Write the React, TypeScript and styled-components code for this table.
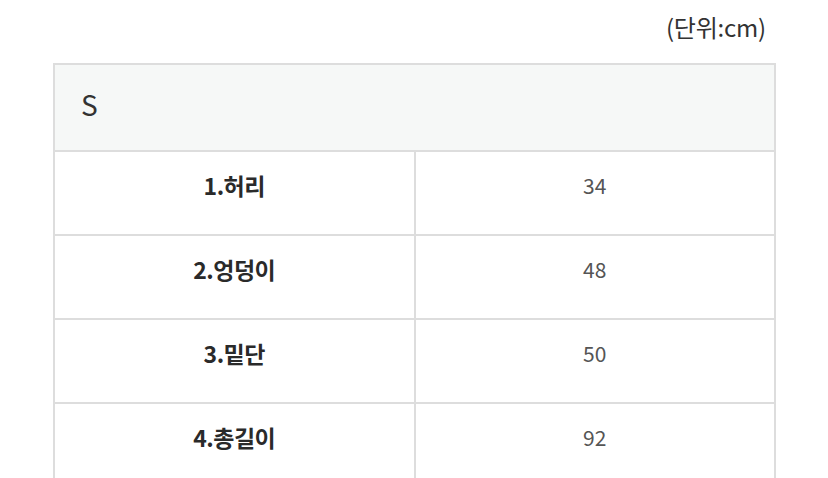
import React from 'react';
import styled, { createGlobalStyle } from 'styled-components';

const GlobalStyle = createGlobalStyle`
    body {
        margin: 0;
        background: #ffffff;
        font-family: "Noto Sans CJK KR", "Noto Sans", sans-serif;
    }
`

const Page = styled.div`
    padding: 0 52px 0 53px;
`

const Unit = styled.div`
    height: 63px;
    display: flex;
    align-items: center;
    justify-content: flex-end;
    padding-right: 10px;
    padding-bottom: 10px;
    box-sizing: border-box;
    font-size: 24px;
    color: #333;
    letter-spacing: -0.2px;
`

const Table = styled.table`
    width: 100%;
    border-collapse: collapse;
    table-layout: fixed;
`

const HeadCell = styled.th`
    height: 78px;
    border: 2px solid #dddddd;
    background: #f6f8f7;
    text-align: left;
    padding: 0 0 7px 26px;
    font-size: 28px;
    font-weight: 400;
    color: #333;
`

const Cell = styled.td<{ label?: boolean }>`
    height: 66px;
    border: 2px solid #dddddd;
    text-align: center;
    padding: 0 0 16px;
    font-size: ${({ label }) => (label ? '23px' : '21px')};
    font-weight: ${({ label }) => (label ? 700 : 400)};
    color: ${({ label }) => (label ? '#2a2a2a' : '#555')};
    letter-spacing: ${({ label }) => (label ? '-0.5px' : '0')};
`

const rows = [
    { name: '1.허리', value: '34' },
    { name: '2.엉덩이', value: '48' },
    { name: '3.밑단', value: '50' },
    { name: '4.총길이', value: '92' },
];

const App = () => {
    return (
        <Page>
            <GlobalStyle />
            <Unit>(단위:cm)</Unit>
            <Table>
                <thead>
                    <tr>
                        <HeadCell colSpan={2}>S</HeadCell>
                    </tr>
                </thead>
                <tbody>
                    {rows.map((row) => (
                        <tr key={row.name}>
                            <Cell label>{row.name}</Cell>
                            <Cell>{row.value}</Cell>
                        </tr>
                    ))}
                </tbody>
            </Table>
        </Page>
    );
};

export default App;
